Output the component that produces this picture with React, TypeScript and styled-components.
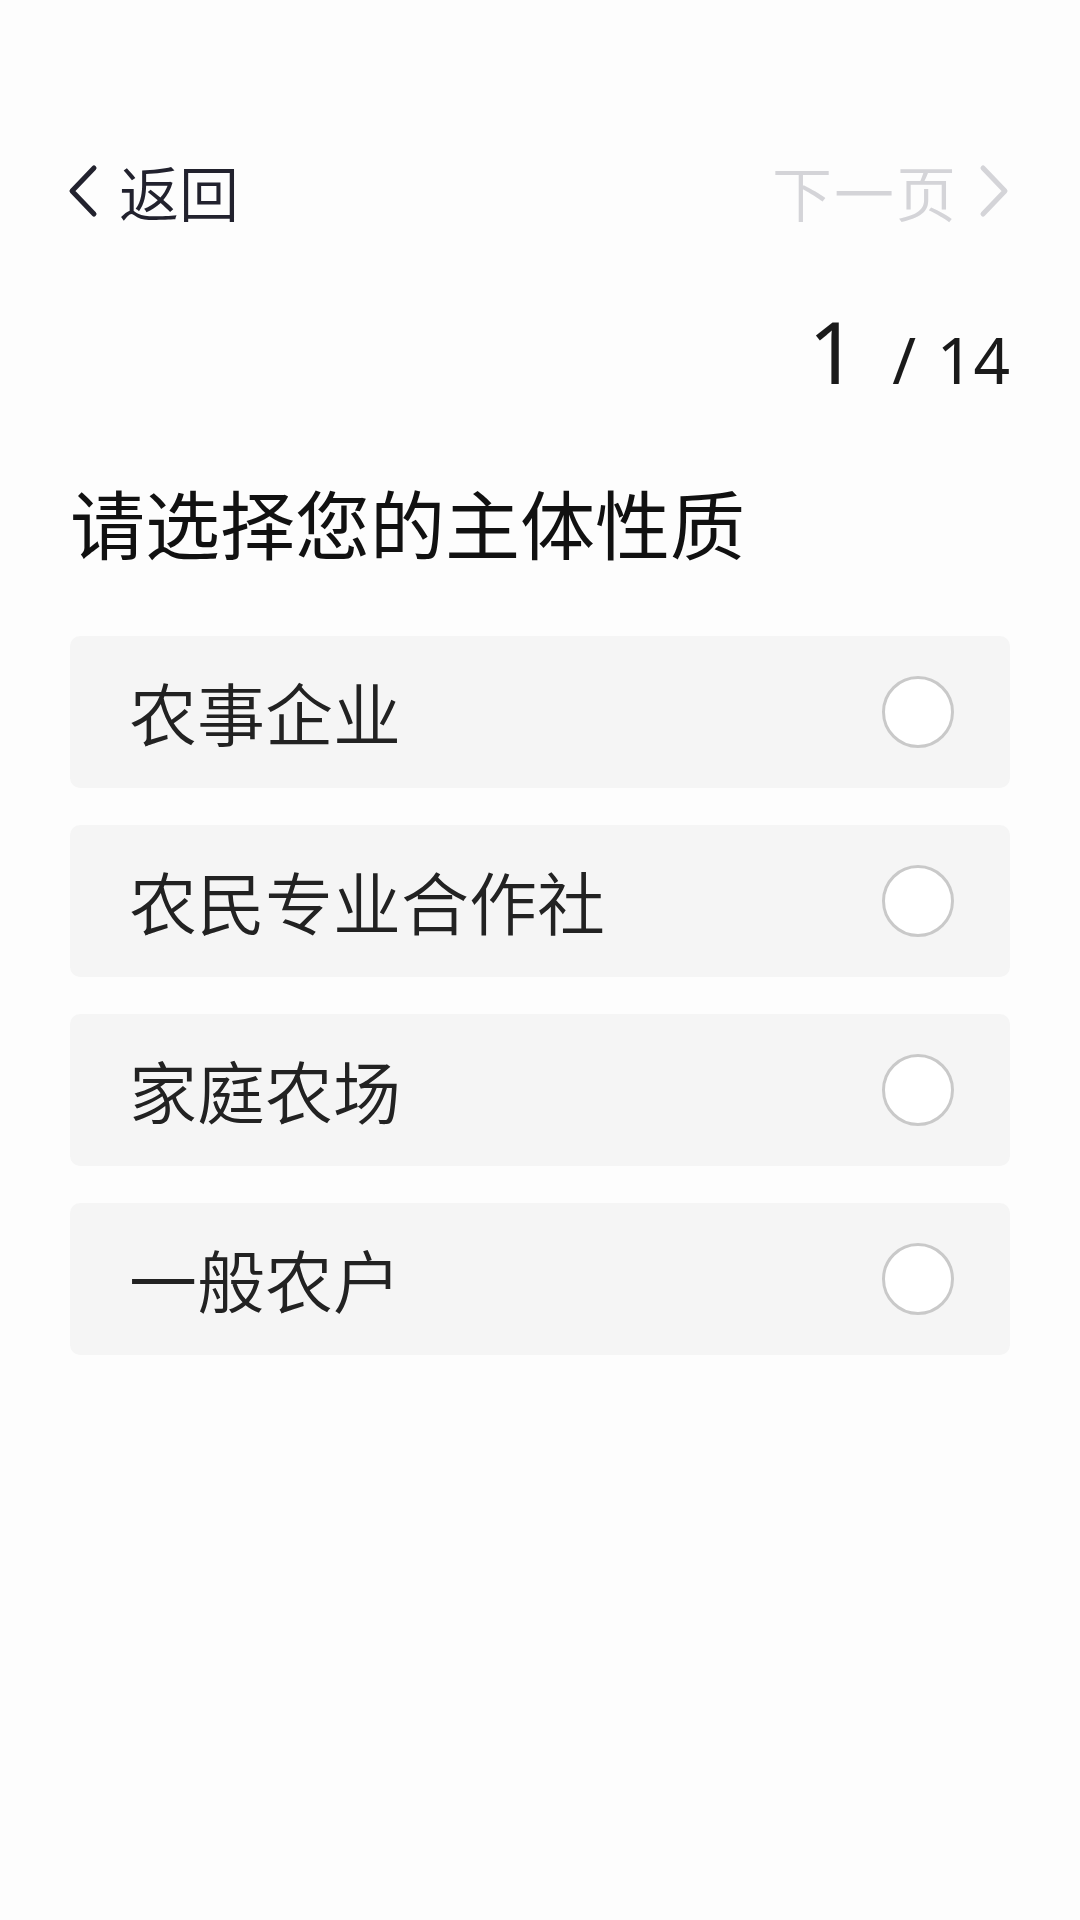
import React, { useState } from "react";
import styled, { createGlobalStyle } from "styled-components";

const GlobalStyle = createGlobalStyle`
  html, body { margin: 0; padding: 0; background: #fdfdfd; }
  body { font-family: "Noto Sans", "Noto Sans CJK SC", sans-serif; }
  * { box-sizing: border-box; }
`;

const Page = styled.div`
  width: 1080px;
  min-height: 1920px;
  background: #fdfdfd;
  padding: 141px 70px 0;
`;

const NavBar = styled.div`
  height: 100px;
  display: flex;
  align-items: center;
  justify-content: space-between;
`;

const NavButton = styled.div<{ $disabled?: boolean }>`
  display: flex;
  align-items: center;
  gap: 20px;
  font-family: "Noto Sans CJK SC", "Noto Sans", sans-serif;
  font-size: 60px;
  font-weight: 350;
  line-height: 1;
  letter-spacing: ${(p) => (p.$disabled ? "2px" : "0")};
  color: ${(p) => (p.$disabled ? "#d4d4d8" : "#22222e")};
`;

const BackSlot = styled.span`
  margin-left: -3px;
  display: flex;
`;

const NextSlot = styled.span`
  display: flex;
`;

const Counter = styled.div`
  margin-top: 67px;
  height: 88px;
  display: flex;
  justify-content: flex-end;
  align-items: baseline;
  font-family: "Noto Sans", sans-serif;
  font-weight: 400;
  color: #1a1a1a;
  line-height: 1;
`;

const Current = styled.span`
  font-size: 86px;
`;

const Total = styled.span`
  font-size: 64px;
  margin-left: 35px;
  word-spacing: 4px;
`;

const Title = styled.h1`
  margin: 88px 0 0;
  font-family: "Noto Sans CJK SC", sans-serif;
  font-size: 75px;
  line-height: 1;
  font-weight: 400;
  color: #111;
`;

const OptionList = styled.div`
  margin-top: 77px;
  display: flex;
  flex-direction: column;
  gap: 37px;
`;

const Option = styled.div`
  height: 152px;
  border-radius: 10px;
  background: #f5f5f5;
  display: flex;
  align-items: center;
  justify-content: space-between;
  padding: 0 56px 0 59px;
  cursor: pointer;
`;

const OptionLabel = styled.span`
  font-family: "Noto Sans CJK SC", sans-serif;
  font-size: 68px;
  font-weight: 350;
  line-height: 1;
  color: #222;
`;

const Radio = styled.span<{ $checked: boolean }>`
  width: 72px;
  height: 72px;
  border-radius: 50%;
  border: 3px solid ${(p) => (p.$checked ? "#2f7cf6" : "#c9c9c9")};
  background: #fff;
  display: flex;
  align-items: center;
  justify-content: center;
  &::after {
    content: "";
    width: 36px;
    height: 36px;
    border-radius: 50%;
    background: ${(p) => (p.$checked ? "#2f7cf6" : "transparent")};
  }
`;

const Chevron = ({ dir, color }: { dir: "left" | "right"; color: string }) => (
  <svg width="32" height="54" viewBox="0 0 32 54" fill="none">
    <polyline
      points={dir === "left" ? "27,4 5,27 27,50" : "5,4 27,27 5,50"}
      stroke={color}
      strokeWidth="5"
      strokeLinecap="round"
      strokeLinejoin="round"
    />
  </svg>
);

const options = ["农事企业", "农民专业合作社", "家庭农场", "一般农户"];

export default function App() {
  const [selected, setSelected] = useState<number | null>(null);
  return (
    <>
      <GlobalStyle />
      <Page>
        <NavBar>
          <NavButton>
            <BackSlot>
              <Chevron dir="left" color="#22222e" />
            </BackSlot>
            返回
          </NavButton>
          <NavButton $disabled>
            下一页
            <NextSlot>
              <Chevron dir="right" color="#d4d4d8" />
            </NextSlot>
          </NavButton>
        </NavBar>
        <Counter>
          <Current>1</Current>
          <Total>/ 14</Total>
        </Counter>
        <Title>请选择您的主体性质</Title>
        <OptionList>
          {options.map((o, i) => (
            <Option key={o} onClick={() => setSelected(i)}>
              <OptionLabel>{o}</OptionLabel>
              <Radio $checked={selected === i} />
            </Option>
          ))}
        </OptionList>
      </Page>
    </>
  );
}
